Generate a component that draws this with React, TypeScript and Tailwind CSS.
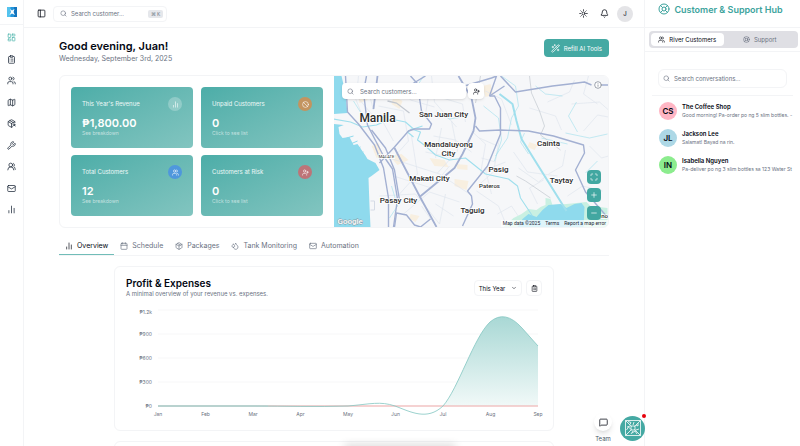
import React from "react";
import {
  Ban,
  Bell,
  Calendar,
  ChartNoAxesColumn,
  ChevronDown,
  ClipboardList,
  Droplets,
  Info,
  LayoutDashboard,
  LifeBuoy,
  Mail,
  Map,
  Maximize,
  MessageSquare,
  Minus,
  Package,
  PackageSearch,
  PanelLeft,
  Plus,
  Search,
  Sun,
  UserPlus,
  Users,
  UsersRound,
  WandSparkles,
  Wrench,
} from "lucide-react";

const navItems = [
  { name: "Dashboard", icon: LayoutDashboard },
  { name: "Orders", icon: ClipboardList },
  { name: "Customers", icon: Users },
  { name: "Map", icon: Map },
  { name: "Packages", icon: PackageSearch },
  { name: "Maintenance", icon: Wrench },
  { name: "Team", icon: UsersRound },
  { name: "Messages", icon: Mail },
  { name: "Reports", icon: ChartNoAxesColumn },
];

const stats = [
  { label: "This Year's Revenue", value: "₱1,800.00", hint: "See breakdown", icon: ChartNoAxesColumn, color: "bg-white/25" },
  { label: "Unpaid Customers", value: "0", hint: "Click to see list", icon: Ban, color: "bg-[#c3945f]" },
  { label: "Total Customers", value: "12", hint: "See breakdown", icon: Users, color: "bg-[#4f97dc]" },
  { label: "Customers at Risk", value: "0", hint: "Click to see list", icon: UserPlus, color: "bg-[#bd7478]" },
];

const tabs = [
  { name: "Overview", icon: ChartNoAxesColumn },
  { name: "Schedule", icon: Calendar },
  { name: "Packages", icon: Package },
  { name: "Tank Monitoring", icon: Droplets },
  { name: "Automation", icon: Mail },
];

const chats = [
  { initials: "CS", name: "The Coffee Shop", text: "Good morning! Pa-order po ng 5 slim bottles. -", color: "bg-[#ffb6c4]" },
  { initials: "JL", name: "Jackson Lee", text: "Salamat! Bayad na rin.", color: "bg-[#add8e6]" },
  { initials: "IN", name: "Isabella Nguyen", text: "Pa-deliver po ng 3 slim bottles sa 123 Water St", color: "bg-[#8cec8e]" },
];

const months = ["Jan", "Feb", "Mar", "Apr", "May", "Jun", "Jul", "Aug", "Sep"];
const ticks = ["₱1.2k", "₱900", "₱600", "₱300", "₱0"];

function Sidebar() {
  return (
    <aside className="w-6 shrink-0 border-r border-gray-100">
      <div className="h-[25px] flex justify-center items-center border-b border-gray-100">
        <svg viewBox="0 0 20 20" className="w-[10px] h-[10px]">
          <rect width="20" height="20" fill="#2596dc" />
          <path d="M0 0h7v20H0z" fill="#55c3ee" />
          <path d="M14 0h6v20h-6z" fill="#1474bd" />
          <path d="M6 4l4 3 5-3-2 6 3 6-6-3-5 3 3-6z" fill="#fff" />
        </svg>
      </div>
      <nav className="h-[181px] mt-2 flex flex-col items-center justify-between">
        {navItems.map((item, i) => (
          <a key={item.name} href="#" aria-label={item.name} className={i === 0 ? "text-[#52b5ae]" : "text-gray-800"}>
            <item.icon className="w-[9px] h-[9px]" />
          </a>
        ))}
      </nav>
    </aside>
  );
}

function Header() {
  return (
    <header className="h-7 shrink-0 flex items-center justify-between border-b border-gray-100 pl-[13px] pr-[11px]">
      <div className="flex items-center gap-[7px]">
        <button aria-label="Toggle sidebar">
          <PanelLeft className="w-[9px] h-[9px]" />
        </button>
        <label className="w-[114px] h-4 flex items-center gap-1 rounded border border-gray-100 pl-[6px] pr-[3px]">
          <Search className="w-[7px] h-[7px] shrink-0 text-gray-500" />
          <input
            aria-label="Search customer"
            placeholder="Search customer..."
            className="min-w-0 flex-1 text-[6px] outline-none placeholder:text-gray-500"
          />
          <kbd className="h-2 px-[3px] rounded-xs bg-gray-200 text-[5px] leading-[8px] font-sans text-gray-500">⌘ K</kbd>
        </label>
      </div>
      <div className="flex items-center">
        <button aria-label="Theme" className="mr-3">
          <Sun className="w-[9px] h-[9px]" />
        </button>
        <button aria-label="Notifications" className="mr-2">
          <Bell className="w-[9px] h-[9px]" />
        </button>
        <button className="w-4 h-4 rounded-full bg-[#e4e4e7] text-[6px] font-medium text-gray-800">J</button>
      </div>
    </header>
  );
}

function StatCards() {
  return (
    <div className="grid grid-cols-2 gap-x-2 gap-y-[7px] p-[11px]">
      {stats.map((stat) => (
        <div
          key={stat.label}
          className="rounded bg-linear-to-br from-[#4cada8] to-[#82c5c0] px-[11px] pt-[10px] flex flex-col text-white"
        >
          <div className="flex justify-between items-center">
            <p className="text-[6px] leading-[14px] text-white/90 whitespace-nowrap">{stat.label}</p>
            <span className={`w-[14px] h-[14px] rounded-full flex justify-center items-center ${stat.color}`}>
              <stat.icon className="w-[7px] h-[7px]" />
            </span>
          </div>
          <p className="mt-[5px] text-[11px] leading-[14px] font-semibold">{stat.value}</p>
          <button className="text-left text-[5px] leading-[6px] text-white/60">{stat.hint}</button>
        </div>
      ))}
    </div>
  );
}

function CityMap() {
  return (
    <div className="relative overflow-hidden bg-[#f6f7f9]">
      <svg viewBox="0 0 275 151" preserveAspectRatio="xMidYMid slice" className="absolute w-full h-full" fill="none">
        {/* built-up blocks */}
        <g fill="#f8efe0">
          <path d="M23 14l9-2 2 12-8 3zM56 80l12-2 7 6-11 5zM96 82l15 2 4 7-14-1zM121 103l14 2-2 9-12-4zM77 138l9 2-4 6-6-3zM38 70l7-3 4 12-6 3zM60 20l9 5-3 8-8-5zM149 10l8-2 3 11-8 2zM122 88l12 1v5l-10-1zM196 66l8 3-3 5-7-3z" />
        </g>
        {/* minor streets */}
        <g stroke="#dfe5ee" strokeWidth="0.7">
          <path d="M17 10l12 30 28 2M25 0l-2 20 15 18M45 30l25 5 5 30-18 20M56 82l50 16 30 20M60 100l38 12 18-22M78 60l6 38-18 20M118 45l6 30-20 22M138 55l14 13-5 30M152 15l16 8 10 26M166 62l-6 34-16 14M46 120l36-2 24 30M70 138l26-22 30 10M143 115l22 15 9 22M158 118l-6-24 20-8M180 76l14 20 30 4M185 92l20 14 8-6M215 98l14-8 3-16M234 120l15-10 20 5M238 28l28-2 9 8M250 55l14-16 11 2M214 26l22-10 5-12M196 32l26 8 6 14M256 70l12 12 7-2M68 10l9 14 24 7M80 4l15 16-3 18M109 22l20 6 3 18M34 12l6 22M98 0l3 26 22 25M50 47l10 18M255 0l-5 18 14 10M204 128l-8-16 14-8M164 138l14-8 12 18M100 60l22 4 16 12M92 76l28 6M108 52l-6 30M146 62l18 8M148 82l14 4M88 130l10 14M112 118l-6 30M120 140l-18-12" />
        </g>
        {/* bay and lake */}
        <path d="M0 0h8l4 17 2 20-14 1z" fill="#8fdaed" />
        <path d="M0 48l10 1 7 3 8 16 9 15 8 4 4 7-8 6-3 2 1 28 1 21H0z" fill="#8fdaed" />
        <path d="M5 51l8-3 6 2 7 4 14 20-3 8-6-4-7-10-4 1-4-8-7 1-3-4z" fill="#f6f7f9" />
        <path d="M13 62l7-2M17 68l7-3M20 74l7-3M24 79l6-3" stroke="#8fdaed" />
        <path d="M170 151l10-9 8-4 7-5 8 1 4-3 5-2v-7l5 1 2 6 14-1 20-2 4 4 17 2v19z" fill="#c9f0e2" />
        <path d="M184 151l5-8 6-5 8 3 6-7 6-5 12-1 6 4 8-4 7-1 3 4-1 20z" fill="#8fdaed" />
        <path d="M37 125h4v9h-4" stroke="#d5dbe6" />
        {/* rivers */}
        <g stroke="#a0dfed" strokeWidth="1.1" strokeLinejoin="round">
          <path d="M0 43l17 3 12 5 14-2 9-4 10-1 10 2 8 7 9-3" />
          <path d="M80 61l-6-5 4-3 9 3-3 8 8 6 10 9 14 5 16-2 20 16 23 5 9 7 3 12 12 18" />
          <path d="M166 18l13 10 4 17 5 18 45 72" strokeWidth="2" />
          <path d="M150 30l15 12 3 22-7 21M20 25l10 16M58 110l6 20-8 12M90 0l-8 13 4 10M103 35l13 8 18-3M191 57l-4 9 8 12M208 62l26 6" strokeWidth=".6" />
          <path d="M168 0l14 10 3 20-7 12M178 42l-4 20-12 18M202 10l10 8 17 2M232 57l24 5 18-4M252 97l12-12M243 26l-8 14 9 16" strokeWidth=".6" />
        </g>
        <g stroke="#c3c8d0" strokeWidth=".7">
          <path d="M196 0l2 17 8 18 5 15-4 9 20 15M147 0l-5 27M183 100l9 5 25 17" />
          <path d="M54 25l9 2 13 10" strokeWidth="1.3" />
        </g>
        {/* highways */}
        <g stroke="#a3b0d2" strokeWidth="1.4" strokeLinejoin="round">
          <path d="M12 0l2 36 11 12 16 21 9 23 5 30v29" />
          <path d="M33 0l-3 16 4 33 16 31 9 13 5 30-4 28" />
          <path d="M38 54l14 18 9 22 5 30" />
          <path d="M44 0l-4 33M61 72l25 48 17 31" strokeWidth="1.8" />
          <path d="M46 87l15-16 14-16 6-2 15 0 2-5-10-13-2-13M77 0l10 11M92 0L77 9" />
          <path d="M61 151l2-14 10 2 8 10 6 2 10-8" />
          <path d="M125 0l13 22 4 20-2 13-11 23-8 14-18 15-17 14" strokeWidth="1.8" />
          <path d="M131 10l27-8 5-2-7 20" />
          <path d="M142 50l4 5 21-1 28 1 25 5 30 9 1 8-9 17 10 22 20 23" />
          <path d="M156 20l5 0 6 12v26l-13 32-20 25 4 5 1 8-10 22" />
          <path d="M156 20l15-10M167 0l15 16 37-6 17-2 15-2 7 3M268 9h7" />
        </g>
        <g fill="#2b2b2b" stroke="#fff" strokeWidth="1.5" paintOrder="stroke" fontFamily="Roboto, sans-serif" fontSize="8" fontWeight="500" textAnchor="middle">
          <text x="44" y="46" fontSize="12">Manila</text>
          <text x="110" y="41">San Juan City</text>
          <text x="115" y="71">Mandaluyong</text>
          <text x="115" y="80">City</text>
          <text x="215" y="70">Cainta</text>
          <text x="96" y="105">Makati City</text>
          <text x="165" y="96">Pasig</text>
          <text x="156" y="112" fontSize="6">Pateros</text>
          <text x="228" y="107">Taytay</text>
          <text x="65" y="127">Pasay City</text>
          <text x="139" y="137">Taguig</text>
          <text x="53" y="82" fontSize="4" fontWeight="400">MALATE</text>
          <text x="271" y="142" fontSize="6">no</text>
        </g>
        <text x="4" y="148" fill="#fff" stroke="#8797a0" strokeWidth=".8" paintOrder="stroke" fontFamily="Roboto, sans-serif" fontSize="8" fontWeight="500">Google</text>
      </svg>
      <label className="absolute left-2 top-[7px] w-[124px] h-4 flex items-center gap-[6px] rounded bg-white px-[5px] shadow-sm">
        <Search className="w-[7px] h-[7px] shrink-0 text-gray-500" />
        <input
          aria-label="Search map"
          placeholder="Search customers..."
          className="min-w-0 flex-1 text-[6px] outline-none placeholder:text-gray-500"
        />
      </label>
      <button aria-label="Add customer" className="absolute left-[134px] top-[7px] w-4 h-4 flex justify-center items-center rounded bg-white shadow-sm">
        <UserPlus className="w-[7px] h-[7px]" />
      </button>
      <button aria-label="Map info" className="absolute right-[6px] top-[5px] rounded-full bg-white text-gray-500">
        <Info className="w-2 h-2" />
      </button>
      <div className="absolute right-0 bottom-0 flex h-[7px] items-center gap-[5px] bg-white/70 px-[2px] font-[Roboto,sans-serif] text-[5px] text-gray-800 whitespace-nowrap">
        <span>Map data ©2025</span>
        <a href="#">Terms</a>
        <a href="#">Report a map error</a>
      </div>
      <div className="absolute right-[7px] bottom-[7px] flex flex-col gap-1 text-white">
        {[Maximize, Plus, Minus].map((Icon, i) => (
          <button
            key={i}
            aria-label={["Full screen", "Zoom in", "Zoom out"][i]}
            className="w-[14px] h-[14px] flex justify-center items-center rounded bg-[#42a7a1]"
          >
            <Icon className="w-2 h-2" />
          </button>
        ))}
      </div>
    </div>
  );
}

function ProfitCard() {
  return (
    <section className="w-full max-w-[440px] mx-auto mt-[10px] h-[165px] shrink-0 rounded-md border border-gray-100 px-[11px] pt-[10px]">
      <div className="flex justify-between">
        <div>
          <h2 className="text-[10px] leading-[13px] font-semibold">Profit &amp; Expenses</h2>
          <p className="text-[6px] leading-[7px] text-gray-500">A minimal overview of your revenue vs. expenses.</p>
        </div>
        <div className="flex gap-1 mt-[3px]">
          <button className="w-12 h-4 flex items-center justify-center gap-[6px] rounded border border-gray-100 text-[6px]">
            This Year <ChevronDown className="w-[6px] h-[6px]" />
          </button>
          <button aria-label="Report" className="w-4 h-4 flex items-center justify-center rounded border border-gray-100">
            <ClipboardList className="w-[7px] h-[7px]" />
          </button>
        </div>
      </div>
      <svg viewBox="0 0 416 115" className="block w-full mt-[10px] overflow-visible" fill="none">
        <defs>
          <linearGradient id="revenue" x1="0" y1="10" x2="0" y2="99" gradientUnits="userSpaceOnUse">
            <stop stopColor="#a9d8d5" />
            <stop offset="1" stopColor="#f1f9f8" />
          </linearGradient>
        </defs>
        {ticks.map((tick, i) => (
          <g key={tick}>
            <path d={`M32 ${3 + i * 24}h380`} stroke="#f7f7f8" />
            <text x="26" y={i === 0 ? 7 : 5 + i * 24} textAnchor="end" fontSize="5" fill="#6b7280">{tick}</text>
          </g>
        ))}
        {months.map((month, i) => (
          <text key={month} x={32 + i * 47.5} y="109" textAnchor="middle" fontSize="5" fill="#6b7280">{month}</text>
        ))}
        <path d="M317 99C332 82 348 30 364 15Q379 2 396 21L412 39V99z" fill="url(#revenue)" />
        <path d="M32 99h380" stroke="#efa9a9" />
        <path d="M32 99h110" stroke="#c5e1df" />
        <path d="M32 99h95C160 99 190 100 222 99C245 97 254 94 269 99C285 105 301 114 317 99C332 82 348 30 364 15Q379 2 396 21L412 39" stroke="#83c6c1" strokeWidth=".8" />
      </svg>
    </section>
  );
}

function SupportHub() {
  return (
    <aside className="w-[156px] shrink-0 border-l border-gray-100">
      <div className="h-7 flex items-start justify-center gap-1 border-b border-gray-100 pt-[3px] pr-1 text-[#3da39d]">
        <LifeBuoy className="w-3 h-3" />
        <h2 className="text-[9px] leading-[13px] font-semibold">Customer &amp; Support Hub</h2>
      </div>
      <div className="h-6 border-b border-gray-100 pl-1 pr-[2px] pt-[3px]">
        <div className="h-[17px] grid grid-cols-2 rounded bg-[#dfdfe4] p-[2px] text-[6px]">
          <button className="flex items-center justify-center gap-1 rounded bg-white">
            <Users className="w-[7px] h-[7px]" /> River Customers
          </button>
          <button className="flex items-center justify-center gap-1 text-gray-500">
            <LifeBuoy className="w-[7px] h-[7px]" /> Support
          </button>
        </div>
      </div>
      <div className="mx-[7px] border-b border-gray-100 pt-[17px] pb-[7px] px-[6px]">
        <label className="h-[19px] flex items-center gap-1 rounded-md border border-gray-100 px-1">
          <Search className="w-[7px] h-[7px] shrink-0 text-gray-500" />
          <input
            aria-label="Search conversations"
            placeholder="Search conversations..."
            className="min-w-0 flex-1 text-[6px] outline-none placeholder:text-gray-500"
          />
        </label>
      </div>
      <ul className="flex flex-col gap-[9px] pl-[14px] pt-[6px]">
        {chats.map((chat) => (
          <li key={chat.name} className="flex items-center gap-[5px]">
            <span className={`w-[18px] h-[18px] shrink-0 rounded-full flex justify-center items-center text-[8px] font-semibold ${chat.color}`}>
              {chat.initials}
            </span>
            <div>
              <p className="text-[6px] leading-[9px] font-semibold">{chat.name}</p>
              <p className="text-[5px] leading-[9px] text-gray-500 whitespace-nowrap">{chat.text}</p>
            </div>
          </li>
        ))}
      </ul>
    </aside>
  );
}

function App() {
  return (
    <div className="relative flex h-screen overflow-hidden bg-white font-[Inter,sans-serif] text-gray-950">
      <Sidebar />
      <div className="min-w-0 flex-1 flex flex-col">
        <Header />
        <main className="flex-1 min-h-0 flex flex-col overflow-hidden px-[35px] pt-[11px]">
          <div className="flex justify-between items-start">
            <div>
              <h1 className="text-[11px] leading-[14px] font-semibold">Good evening, Juan!</h1>
              <p className="text-[7px] leading-[11px] text-gray-500">Wednesday, September 3rd, 2025</p>
            </div>
            <button className="h-[18px] flex items-center gap-1 rounded bg-[#45a9a3] px-[7px] text-[6px] text-white">
              <WandSparkles className="w-[9px] h-[9px]" /> Refill AI Tools
            </button>
          </div>
          <div className="mt-[11px] h-[153px] shrink-0 grid grid-cols-2 rounded-md overflow-hidden border border-gray-100">
            <StatCards />
            <CityMap />
          </div>
          <nav className="mt-[10px] h-[18px] shrink-0 flex border-b border-gray-100">
            {tabs.map((tab, i) => (
              <button
                key={tab.name}
                className={`flex items-center gap-1 px-[6px] text-[7px] border-b ${
                  i === 0 ? "border-[#71bdb8]" : "border-transparent text-gray-500"
                }`}
              >
                <tab.icon className="w-2 h-2" />
                {tab.name}
              </button>
            ))}
          </nav>
          <ProfitCard />
          <section className="w-full max-w-[440px] mx-auto mt-[10px] h-10 shrink-0 rounded-md border border-gray-100" />
        </main>
      </div>
      <SupportHub />
      <div className="absolute left-1/2 -bottom-1 -translate-x-1/2 w-[110px] h-1 rounded-full shadow-[0_0_8px_1px_#00000030]" />
      <div className="absolute right-[155px] bottom-[3px] flex items-center gap-2">
        <div className="flex flex-col items-center gap-[3px]">
          <button aria-label="Team chat" className="w-[18px] h-[18px] rounded-full bg-white flex justify-center items-center shadow-md">
            <MessageSquare className="w-[9px] h-[9px]" />
          </button>
          <span className="text-[6px] leading-[9px] text-gray-600">Team</span>
        </div>
        <button aria-label="Assistant" className="relative w-[25px] h-[25px] rounded-full bg-[#45a9a3] flex justify-center items-center text-white">
          <svg viewBox="0 0 16 16" className="w-4 h-4" fill="none" stroke="currentColor" strokeWidth=".8">
            <path d="M.5.5h15v15H.5zM.5.5l6 6M15.5.5l-6 6M.5 15.5l6-6M15.5 15.5l-6-6M6 6h4v4H6z" />
            <path d="M3 1.5l3 1-1 2M13 3v3l-2-1M1.5 10l2-3 2 2M7 13l3-2 2 3M9 2l-1 3M2 7l3-1M14 9l-3 1M6 14l2-3" />
          </svg>
          <span className="absolute -right-[1px] -top-[2px] w-1 h-1 rounded-full bg-red-600" />
        </button>
      </div>
    </div>
  );
}

export default App;
